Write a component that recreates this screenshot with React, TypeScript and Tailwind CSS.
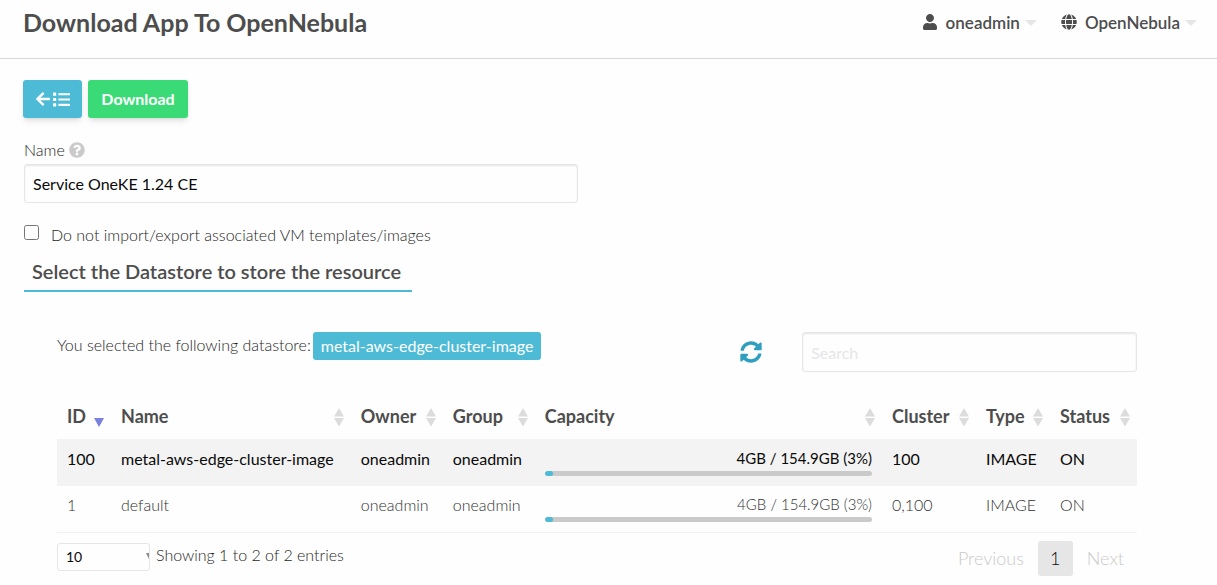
import { useState } from "react";
import { FaArrowLeft, FaGlobe, FaList, FaQuestionCircle, FaSyncAlt, FaUser } from "react-icons/fa";

type Datastore = {
  id: string;
  name: string;
  owner: string;
  group: string;
  capacity: string;
  percent: number;
  cluster: string;
  type: string;
  status: string;
};

const datastores: Datastore[] = [
  { id: "100", name: "metal-aws-edge-cluster-image", owner: "oneadmin", group: "oneadmin", capacity: "4GB / 154.9GB (3%)", percent: 2.5, cluster: "100", type: "IMAGE", status: "ON" },
  { id: "1", name: "default", owner: "oneadmin", group: "oneadmin", capacity: "4GB / 154.9GB (3%)", percent: 2.5, cluster: "0,100", type: "IMAGE", status: "ON" },
];

const columns = [
  { label: "ID", width: "w-[54px]" },
  { label: "Name", width: "w-[22.2%]" },
  { label: "Owner", width: "w-[92px]" },
  { label: "Group", width: "w-[92px]" },
  { label: "Capacity", width: "w-auto" },
  { label: "Cluster", width: "w-[94px]" },
  { label: "Type", width: "w-[74px]" },
  { label: "Status", width: "w-[87px]" },
];

function SortMark({ active }: { active: boolean }) {
  return (
    <svg viewBox="0 0 10 20" className="mt-[2px] h-5 w-[10px] shrink-0" aria-hidden="true">
      {active ? (
        <path d="M0 11h10l-5 9z" fill="#7a80dd" />
      ) : (
        <path d="M0 9.500 5 1l5 8.500zM0 11h10l-5 8.500z" fill="#dcdcdc" />
      )}
    </svg>
  );
}

function Caret() {
  return (
    <svg viewBox="0 0 12 6" className="h-[6px] w-3" aria-hidden="true">
      <path d="M0 0h12L6 6z" fill="#e6e6e6" />
    </svg>
  );
}

function DatastoreTable({ selected, onSelect }: { selected: string; onSelect: (id: string) => void }) {
  return (
    <table className="w-full table-fixed border-collapse text-left">
      <colgroup>
        {columns.map((c) => (
          <col key={c.label} className={c.width} />
        ))}
      </colgroup>
      <thead>
        <tr className="h-[47px] text-[18px] leading-6 text-[#4d4d4d]">
          {columns.map((c, i) => (
            <th key={c.label} scope="col" className="p-0 pr-[7px] pl-[10px] font-bold">
              <div className="flex items-center justify-between">
                <span>{c.label}</span>
                <SortMark active={i === 0} />
              </div>
            </th>
          ))}
        </tr>
      </thead>
      <tbody>
        {datastores.map((d) => (
          <tr
            key={d.id}
            onClick={() => onSelect(d.id)}
            className={
              d.id === selected
                ? "h-[47px] cursor-pointer bg-[#f3f3f3] text-[16px] font-normal text-[#0a0a0a]"
                : "h-[46px] cursor-pointer border-b border-[#f1f1f1] text-[16px] font-light text-[#333]"
            }
          >
            <td className="px-[10px] pb-2">{d.id}</td>
            <td className="px-[10px] pb-2 whitespace-nowrap">{d.name}</td>
            <td className="px-[10px] pb-2">{d.owner}</td>
            <td className="px-[10px] pb-2">{d.group}</td>
            <td className="px-[10px] py-0">
              <div className="flex flex-col gap-1 text-right text-[15px] leading-[18px]">
                <span>{d.capacity}</span>
                <div className="h-[5px] overflow-hidden rounded-sm bg-[#cacaca]">
                  <div className="h-full rounded-sm bg-[#4dbbd6]" style={{ width: `${d.percent}%` }} />
                </div>
              </div>
            </td>
            <td className="px-[10px] pb-2">{d.cluster}</td>
            <td className="px-[10px] pb-2">{d.type}</td>
            <td className="px-[10px] pb-2">{d.status}</td>
          </tr>
        ))}
      </tbody>
    </table>
  );
}

export default function App() {
  const [name, setName] = useState("Service OneKE 1.24 CE");
  const [selected, setSelected] = useState("100");
  const chosen = datastores.find((d) => d.id === selected);

  return (
    <div className="min-h-screen bg-[#fefefe] font-['Lato',sans-serif] text-[16px] font-light text-[#0a0a0a]">
      <header className="flex h-[59px] items-start justify-between border-b border-[#d8d8d8] pr-5 pl-[23px] text-[#4d4d4d]">
        <h1 className="pt-1 text-[25px] leading-9 font-bold">Download App To OpenNebula</h1>
        <nav className="flex items-center gap-6 pt-2 text-[17px] leading-[30px] font-semibold">
          <button type="button" className="flex items-center gap-[5px]">
            <FaUser size={16} className="mr-[3px] mb-[2px]" />
            oneadmin
            <Caret />
          </button>
          <button type="button" className="flex items-center gap-[5px]">
            <FaGlobe size={16} className="mr-[3px] mb-[2px]" />
            OpenNebula
            <Caret />
          </button>
        </nav>
      </header>

      <main className="px-6">
        <div className="-ml-px flex gap-[6px] pt-[21px]">
          <button type="button" aria-label="Back to list" className="flex h-[38px] w-[59px] items-center justify-center gap-[2px] rounded-[3px] bg-[#4dbbd6] text-white shadow-md">
            <FaArrowLeft size={16} />
            <FaList size={17} />
          </button>
          <button type="button" className="h-[38px] w-[100px] rounded-[3px] bg-[#3adb76] text-[16px] font-bold text-white shadow-md">
            Download
          </button>
        </div>

        <div className="flex w-[calc(50%-31px)] flex-col pt-5">
          <label htmlFor="app-name" className="flex items-center gap-1 leading-6 text-[#1f1f1f]">
            Name
            <FaQuestionCircle size={16} className="text-[#cacaca]" />
          </label>
          <input
            id="app-name"
            value={name}
            onChange={(e) => setName(e.target.value)}
            className="mt-[2px] h-[39px] w-full rounded-[3px] border border-[#e6e6e6] bg-[#fefefe] px-2 text-[16px] font-normal shadow-[inset_0_1px_2px_rgba(10,10,10,0.1)]"
          />
        </div>

        <div className="flex items-start gap-3 pt-5">
          <input id="no-templates" type="checkbox" className="mt-[2px] h-[15px] w-[15px]" />
          <label htmlFor="no-templates" className="leading-6 text-[#1f1f1f]">
            Do not import/export associated VM templates/images
          </label>
        </div>

        <h2 className="w-fit border-b-2 border-[#4dbbd6] pt-3 pr-[11px] pb-[7px] pl-2 text-[20px] leading-6 font-semibold text-[#4d4d4d]">
          Select the Datastore to store the resource
        </h2>

        <section className="pt-10 pr-14 pl-[33px]">
          <div className="flex h-[60px] items-start">
            <p className="flex grow items-start gap-[2px] leading-[26px] text-[#1f1f1f]">
              You selected the following datastore:
              <span className="rounded-[3px] bg-[#4dbbd6] px-2 leading-7 font-normal text-white">{chosen?.name}</span>
            </p>
            <button type="button" aria-label="Refresh" className="mt-[9px] mr-10 text-[#2e9fc0]">
              <FaSyncAlt size={22} />
            </button>
            <input
              type="search"
              aria-label="Search"
              placeholder="Search"
              className="h-10 w-[31%] rounded-[3px] border border-[#e6e6e6] bg-[#fefefe] px-2 text-[16px] font-normal shadow-[inset_0_1px_2px_rgba(10,10,10,0.1)] placeholder:text-[#e6e6e6]"
            />
          </div>

          <DatastoreTable selected={selected} onSelect={setSelected} />

          <div className="flex items-start justify-between pt-2">
            <div className="flex items-start gap-[6px] pt-[2px]">
              <div className="relative">
                <select aria-label="Entries per page" defaultValue="10" className="block h-7 w-[93px] appearance-none rounded-[3px] border border-[#e6e6e6] bg-[#fefefe] px-2 text-[14px] font-normal">
                  <option>10</option>
                  <option>25</option>
                  <option>50</option>
                </select>
                <svg viewBox="0 0 3 6" className="pointer-events-none absolute top-[10px] right-px h-[6px] w-[3px]" aria-hidden="true">
                  <path d="M0 0h3v6z" fill="#8a8a8a" />
                </svg>
              </div>
              <span className="leading-6 text-[#1f1f1f]">Showing 1 to 2 of 2 entries</span>
            </div>
            <nav aria-label="Pages" className="flex items-center text-[18px] leading-[35px]">
              <button type="button" disabled className="pr-[14px] text-[#cacaca]">Previous</button>
              <button type="button" aria-current="page" className="h-[35px] w-[35px] rounded-[3px] bg-[#e6e6e6]">1</button>
              <button type="button" disabled className="pr-[13px] pl-[14px] text-[#cacaca]">Next</button>
            </nav>
          </div>
        </section>
      </main>
    </div>
  );
}
